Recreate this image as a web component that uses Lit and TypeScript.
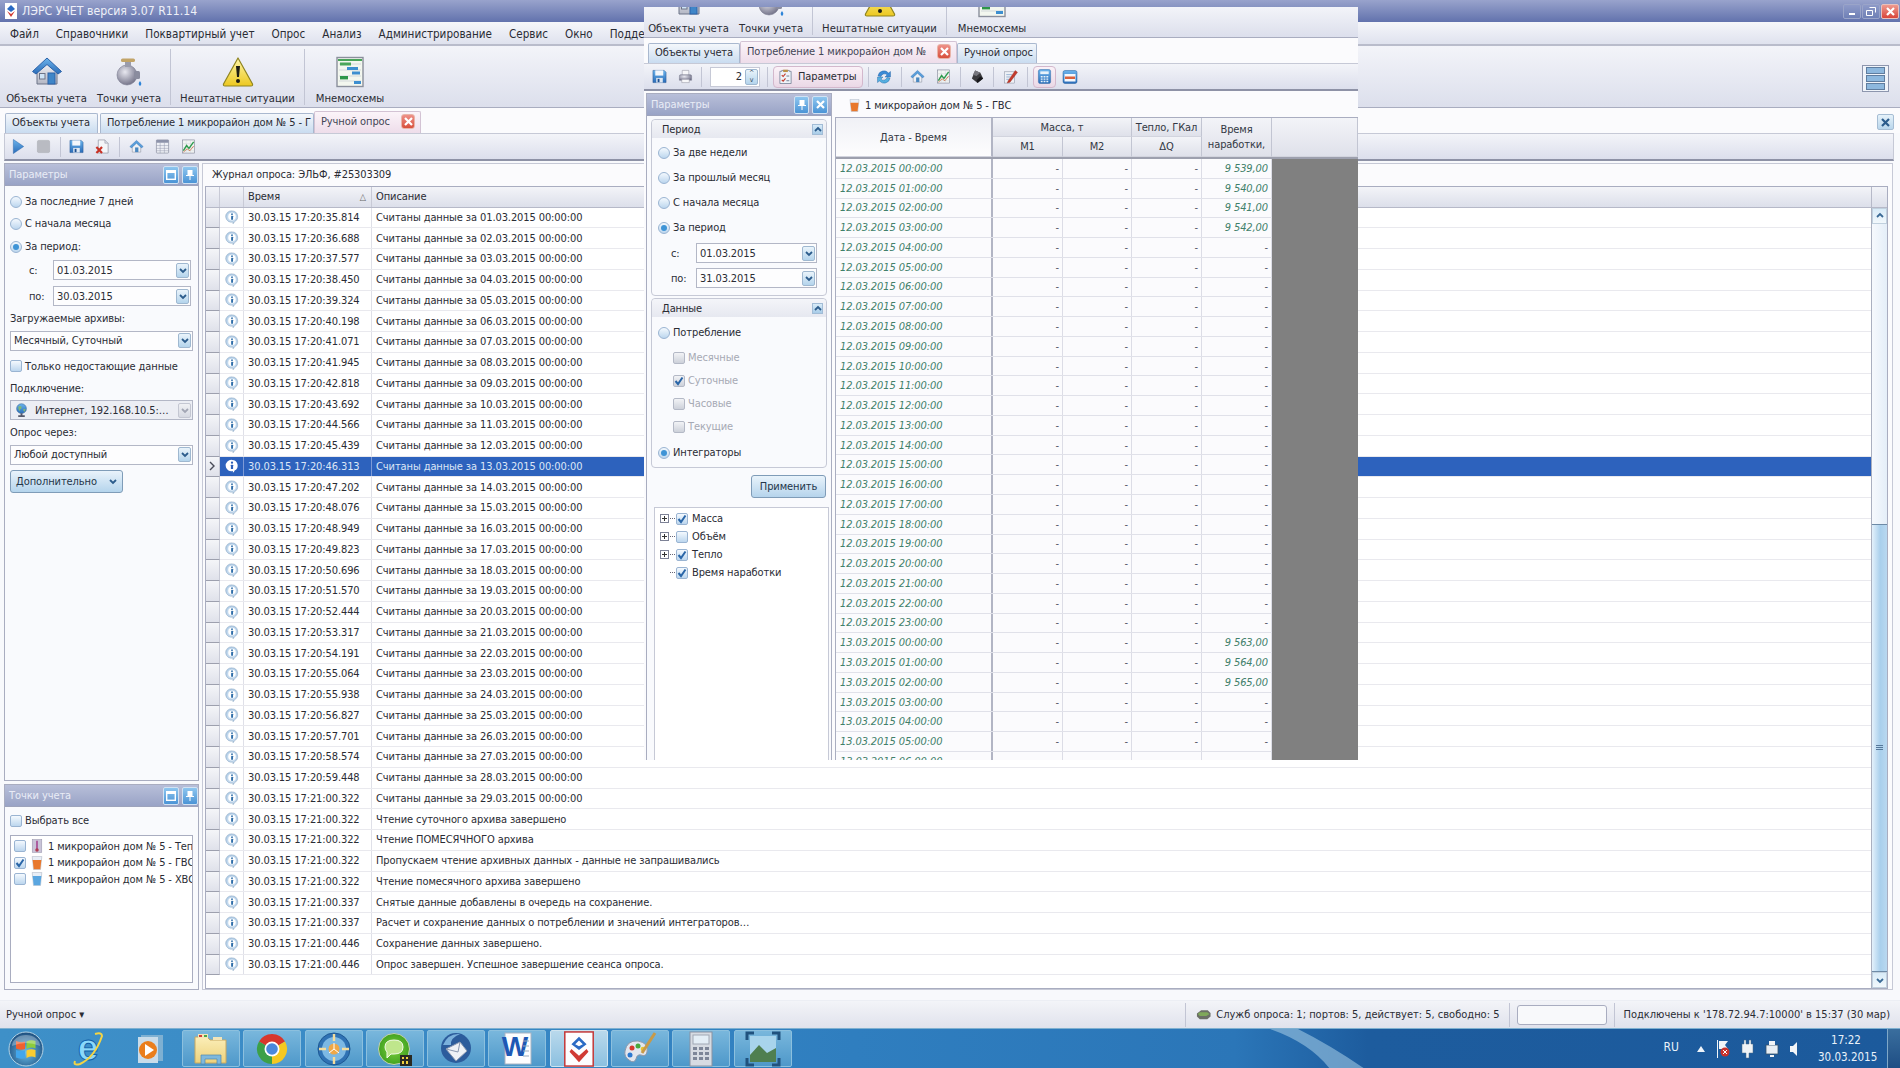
import { LitElement, html, css, svg } from 'lit';
import { customElement } from 'lit/decorators.js';

const ico = (w: number, h: number, body: unknown) =>
  html`<svg width=${w} height=${h} viewBox="0 0 32 32" class="ico">${body}</svg>`;

const icons: Record<string, (s: number) => unknown> = {
  home: (s) => ico(s, s, svg`
    <path d="M6 15 L16 6 L26 15 V28 H6Z" fill="url(#gWall)" stroke="#6d7488"/>
    <path d="M1.5 15.5 L16 2 L30.5 15.5 L27 18 L16 8.5 L5 18Z" fill="url(#gRoof)" stroke="#2c62a8"/>
    <rect x="17" y="17" width="7" height="11" fill="#3f86c8" stroke="#2c62a8"/>
    <rect x="8.5" y="17.5" width="5.5" height="5.5" fill="#cfe4f6" stroke="#6d7488"/>`),
  tap: (s) => ico(s, s, svg`
    <circle cx="14" cy="19" r="10" fill="url(#gSteel)" stroke="#7a7c90" stroke-width=".6"/>
    <rect x="12" y="5" width="6" height="6" fill="#9a9cac"/>
    <rect x="8" y="2.5" width="14" height="3.5" rx="1.6" fill="#c2a468"/>
    <rect x="21" y="15" width="6" height="8" rx="1.5" fill="#8a8c9e"/>
    <path d="M27 25 q-2.6 3 0 5 q2.6-2 0-5Z" fill="#2d84d8"/>`),
  warn: (s) => ico(s, s, svg`
    <path d="M16 2 L30.5 28 Q31 30 29 30 H3 Q1 30 1.5 28Z" fill="url(#gWarn)" stroke="#8f8420" stroke-width="1.2" stroke-linejoin="round"/>
    <path d="M14 10 h4 l-1 11 h-2Z" fill="#1c1c14"/>
    <circle cx="16" cy="25" r="2" fill="#1c1c14"/>`),
  gantt: (s) => ico(s, s, svg`
    <rect x="3" y="1.5" width="26" height="29" fill="#f3f7ef" stroke="#8a8f9c" stroke-width="1.4"/>
    <rect x="4" y="3" width="24" height="2" fill="#49a45a"/>
    <path d="M5 8H27M5 14H27M5 20H27M5 25H27" stroke="#c5cbd4" stroke-width=".7"/>
    <rect x="6" y="6.5" width="11" height="3" fill="#4aa65a"/>
    <rect x="13" y="11" width="11" height="3" fill="#3d8fd0"/>
    <rect x="18" y="15.5" width="8" height="3" fill="#3d8fd0"/>
    <rect x="6" y="20" width="8" height="3.4" fill="#2d9648"/>
    <rect x="20" y="25" width="7" height="3" fill="#3d8fd0"/>`),
  info: (s) => ico(s, s, svg`
    <path d="M16 2 a13 13 0 0 1 6 24.5 q-1 3 -4 5 q.6-3 -.2-4 A13 13 0 1 1 16 2Z" fill="url(#gInfo)" stroke="#7d99b8"/>
    <circle cx="16" cy="15" r="8.5" fill="#fff"/>
    <circle cx="16" cy="9.5" r="2" fill="#2e6da8"/>
    <rect x="14" y="13" width="4.4" height="9.5" rx="1" fill="#2e6da8"/>`),
  infoSel: (s) => ico(s, s, svg`
    <path d="M16 2 a13 13 0 0 1 6 24.5 q-1 3 -4 5 q.6-3 -.2-4 A13 13 0 1 1 16 2Z" fill="#fff"/>
    <circle cx="16" cy="8.5" r="2.6" fill="#2c5fb8"/>
    <rect x="13.5" y="13" width="5" height="10" rx="1" fill="#2c5fb8"/>`),
  play: (s) => ico(s, s, svg`<path d="M5 1 L27 16 L5 31Z" fill="url(#gRoof)" stroke="#1f5fa8"/>`),
  stop: (s) => ico(s, s, svg`<rect x="3" y="3" width="26" height="26" rx="3" fill="#b9bbc2" stroke="#a2a4ac"/>`),
  save: (s) => ico(s, s, svg`
    <path d="M2 3 H26 L30 7 V29 H2Z" fill="url(#gRoof)" stroke="#1d4f90"/>
    <rect x="7" y="3" width="17" height="11" fill="#f4f7fb"/>
    <rect x="9" y="19" width="14" height="10" fill="#dfe8f2"/>
    <rect x="12" y="21" width="4" height="7" fill="#1d4f90"/>`),
  docx: (s) => ico(s, s, svg`
    <path d="M7 2 H21 L28 9 V30 H7Z" fill="#f4f5f8" stroke="#8b8e9c" stroke-width="1.4"/>
    <path d="M21 2 V9 H28" fill="#d6d9e2" stroke="#8b8e9c"/>
    <path d="M3 17 L15 30 M15 17 L3 30" stroke="#c83226" stroke-width="4.6"/>`),
  homeSm: (s) => ico(s, s, svg`
    <path d="M7 15 L16 7 L25 15 V28 H7Z" fill="#eef0f4" stroke="#7b8190"/>
    <path d="M2 16 L16 3 L30 16 L27 19 L16 9 L5 19Z" fill="#5aa0dc" stroke="#2c6cb0"/>
    <rect x="13" y="18" width="7" height="10" fill="#4a88c0"/>`),
  table: (s) => ico(s, s, svg`
    <rect x="3" y="2" width="26" height="28" rx="1.5" fill="#eef0f5" stroke="#7e8396" stroke-width="1.3"/>
    <rect x="3" y="2" width="26" height="6" fill="#8d93aa"/>
    <path d="M3 14H29M3 20H29M3 25H29M11 8V30M20 8V30" stroke="#8d93aa"/>`),
  chart: (s) => ico(s, s, svg`
    <rect x="3" y="2" width="26" height="28" fill="#f2f5f3" stroke="#7e8396" stroke-width="1.3"/>
    <path d="M3 10H29M3 18H29M3 25H29M11 2V30M20 2V30" stroke="#c6ccd4" stroke-width=".8"/>
    <path d="M5 25 L12 14 L17 20 L27 6" fill="none" stroke="#2d9a4c" stroke-width="3"/>
    <path d="M5 28 L13 21 L19 25 L27 15" fill="none" stroke="#c8653a" stroke-width="1.6"/>`),
  print: (s) => ico(s, s, svg`
    <path d="M9 3 H23 V14 H9Z" fill="#f7f7f9" stroke="#868895"/>
    <path d="M3 15 Q3 12 6 12 H26 Q29 12 29 15 V24 H3Z" fill="url(#gSteel)" stroke="#74768a"/>
    <path d="M8 22 H24 V29 H8Z" fill="#f7f7f9" stroke="#868895"/>`),
  refresh: (s) => ico(s, s, svg`
    <path d="M4 14 A12 12 0 0 1 25 8 L29 5 V16 H18 L22 12 A7 7 0 0 0 10 15Z" fill="#3a8ad6" stroke="#24609e" stroke-width=".8"/>
    <path d="M28 18 A12 12 0 0 1 7 24 L3 27 V16 H14 L10 20 A7 7 0 0 0 22 17Z" fill="#55b0e0" stroke="#24609e" stroke-width=".8"/>`),
  stamp: (s) => ico(s, s, svg`
    <path d="M11 3 L22 8 L28 20 L16 30 L4 20Z" fill="#3a3a3e"/>
    <path d="M11 3 L22 8 L14 15 L6 12Z" fill="#77777e"/>
    <path d="M22 16 L28 20 L16 30 L14 24Z" fill="#18181c"/>`),
  edit: (s) => ico(s, s, svg`
    <rect x="3" y="6" width="21" height="24" fill="#eef1f6" stroke="#7d8496"/>
    <path d="M7 12H19M7 17H16M7 22H14" stroke="#7fa0c8" stroke-width="1.6"/>
    <path d="M11 25 L26 3 L31 7 L15 28 L9 30Z" fill="#c23a2c" stroke="#7d2016" stroke-width=".6"/>`),
  calc: (s) => ico(s, s, svg`
    <rect x="3" y="1" width="26" height="30" rx="4" fill="url(#gRoof)" stroke="#24609e"/>
    <rect x="7" y="5" width="18" height="6" fill="#e8f3fb"/>
    <path d="M8 15h4v3H8zM14 15h4v3h-4zM20 15h4v3h-4zM8 20h4v3H8zM14 20h4v3h-4zM20 20h4v3h-4zM8 25h4v3H8zM14 25h4v3h-4zM20 25h4v3h-4z" fill="#e8f3fb"/>`),
  calRed: (s) => ico(s, s, svg`
    <rect x="2" y="3" width="28" height="26" rx="4" fill="url(#gRoof)" stroke="#24609e"/>
    <rect x="5" y="10" width="22" height="15" fill="#f5f8fb"/>
    <rect x="6" y="15" width="20" height="5" fill="#d9603c"/>`),
  params: (s) => ico(s, s, svg`
    <path d="M8 3h16v2h4v26H4V5h4Z" fill="#eef3f9" stroke="#6d7a90" stroke-width="1.6"/>
    <rect x="11" y="1.5" width="10" height="5" fill="#b99148"/>
    <path d="M8 13l3 3 5-6M8 23l3 3 5-6" fill="none" stroke="#c23a2c" stroke-width="2.4"/>
    <path d="M18 15h6M18 25h6" stroke="#6d7a90" stroke-width="2"/>`),
  cupHot: (s) => ico(s, s, svg`
    <path d="M5 1 H27 L24 31 H8Z" fill="#e8eef6" stroke="#9aa3b4"/>
    <path d="M6 9 H26 L23.500 30 H8.500Z" fill="#e8782c"/>`),
  cupCold: (s) => ico(s, s, svg`
    <path d="M5 1 H27 L24 31 H8Z" fill="#e8eef6" stroke="#9aa3b4"/>
    <path d="M6 9 H26 L23.500 30 H8.500Z" fill="#5aa6e0"/>`),
  thermo: (s) => ico(s, s, svg`
    <rect x="5" y="1" width="22" height="30" fill="#c9c4d8" stroke="#8c88a0"/>
    <rect x="14" y="4" width="4" height="19" fill="#a85098"/>
    <circle cx="16" cy="25" r="4" fill="#b03a50"/>`),
  globe: (s) => ico(s, s, svg`
    <circle cx="16" cy="12" r="10.5" fill="url(#gRoof)" stroke="#2c5c90"/>
    <path d="M9 8q5-3 7 0t-3 6l-2 4zM19 14q4-2 6 0l-3 5z" fill="#7fb878"/>
    <path d="M14 22h4v4h5v4H9v-4h5z" fill="#54586a"/>`),
  box: (s) => ico(s, s, svg`
    <path d="M2 14 L11 7 H25 L31 13 V20 L24 26 H8 L2 20Z" fill="#6b6f66"/>
    <path d="M8 11 H24 L29 15 L22 19 H8 L4 15Z" fill="#7fa85a"/>`),
};

const tb: Record<string, unknown> = {
  orb: svg`<svg width="36" height="36" viewBox="0 0 36 36">
    <circle cx="18" cy="18" r="17" fill="url(#gOrb)" stroke="#b4d4e6"/>
    <path d="M8 10q4.500 2 9 .5v7.500q-4.500 1.500-9-.5z" fill="#f0602e"/>
    <path d="M18.500 10.500q4.500-2 9-.5v7.500q-4.500-2-9 .5z" fill="#8ccc3c"/>
    <path d="M8 19q4.500 2 9 .5v7.500q-4.500 1.500-9-.5z" fill="#42a6ec"/>
    <path d="M18.500 19.500q4.500-2 9-.5v7.500q-4.500-2-9 .5z" fill="#fbcc30"/>
    <path d="M4 15a14 11 0 0 1 28 0q-14-6-28 0z" fill="#fff" opacity=".3"/></svg>`,
  ie: svg`<svg width="34" height="36" viewBox="0 0 34 36">
    <text x="17" y="29" text-anchor="middle" font-family="Liberation Sans, sans-serif" font-size="37" font-weight="700" fill="#8ad8fa" stroke="#0f5ea8" stroke-width=".9">e</text>
    <path d="M4 30 Q2 35 9 33 Q24 26 31 5 Q31 1 24 3" fill="none" stroke="#f4d444" stroke-width="2"/></svg>`,
  media: svg`<svg width="28" height="36" viewBox="0 0 28 36">
    <rect x="4" y="4" width="22" height="26" fill="#8ab6d4" opacity=".85"/>
    <rect x="1" y="6" width="20" height="26" fill="#c9dcea"/>
    <circle cx="11" cy="19" r="9" fill="#ea7e1c"/>
    <path d="M8 13 L17 19 L8 25Z" fill="#fff"/></svg>`,
  folder: svg`<svg width="36" height="36" viewBox="0 0 36 36">
    <path d="M2 6 H14 L17 9 H33 V32 H2Z" fill="url(#gFold)" stroke="#c8a860"/>
    <rect x="5" y="3" width="10" height="4" fill="#f2e4b8"/>
    <rect x="6" y="4" width="3" height="2" fill="#d2403a"/><rect x="11" y="4" width="3" height="2" fill="#48a848"/>
    <rect x="20" y="6" width="9" height="3" fill="#f2e4b8"/>
    <path d="M8 33 V24 H28 V33 H24 V28 H12 V33Z" fill="#7fb8dc" stroke="#4f88b0" stroke-width=".7"/></svg>`,
  chrome: svg`<svg width="36" height="36" viewBox="0 0 36 36">
    <path d="M18 18 L5 10.500 A15 15 0 0 1 31 10.500Z" fill="#d8372c"/>
    <path d="M18 18 L31 10.500 A15 15 0 0 1 18 33Z" fill="#f4c821"/>
    <path d="M18 18 L18 33 A15 15 0 0 1 5 10.500Z" fill="#3ca048"/>
    <circle cx="18" cy="18" r="7.500" fill="#fff"/><circle cx="18" cy="18" r="5.800" fill="#4a88dc"/></svg>`,
  sun: svg`<svg width="36" height="36" viewBox="0 0 36 36">
    <circle cx="18" cy="18" r="16" fill="#2f72b4" stroke="#1d5894"/>
    <circle cx="18" cy="18" r="12" fill="#7cb8e4"/>
    <circle cx="18" cy="18" r="5.500" fill="#f0a848"/>
    <path d="M18 3V10M18 26V33M3 18H10M26 18H33" stroke="#f4dc9c" stroke-width="2.400"/>
    <path d="M18 18V12M18 18L13 22M18 18L23 22" stroke="#fff" stroke-width="1"/></svg>`,
  chat: svg`<svg width="36" height="36" viewBox="0 0 36 36">
    <circle cx="17" cy="18" r="15.500" fill="url(#gChat)" stroke="#c4d0b4"/>
    <path d="M8 16 Q8 9 17 9 Q26 9 26 16 Q26 23 17 23 H14 L10 27 V21 Q8 19 8 16Z" fill="#bfe68c" stroke="#f4fbe8"/>
    <rect x="23" y="24" width="12" height="11" fill="#2a2a22"/>
    <path d="M25 26h2v2h-2zM29 26h2v2h-2zM25 30h2v3h-2zM29 30h2v3h-2z" fill="#f0d040"/></svg>`,
  bird: svg`<svg width="36" height="36" viewBox="0 0 36 36">
    <circle cx="18" cy="17" r="15" fill="#2c5c9c"/>
    <path d="M5 14 Q10 2 22 3 Q12 7 13 14Z" fill="#7ab0dc"/>
    <path d="M8 18 L22 11 L29 20 L18 30Z" fill="#eef1f6" stroke="#8a98b0"/>
    <path d="M8 18 L20 21 L22 11" fill="none" stroke="#8a98b0"/></svg>`,
  word: svg`<svg width="36" height="36" viewBox="0 0 36 36">
    <rect x="6" y="2" width="26" height="31" fill="#fdfdfe" stroke="#a8b4c4"/>
    <text x="16" y="25" text-anchor="middle" font-family="Liberation Sans, sans-serif" font-size="28" font-weight="700" fill="#1e58b4">W</text>
    <path d="M24 10h6M24 15h6M24 20h6M24 25h6" stroke="#9ab" stroke-width="1.200"/></svg>`,
  lers: svg`<svg width="36" height="36" viewBox="0 0 36 38">
    <rect x="3" y="1" width="30" height="36" fill="#fdfdfe" stroke="#c43a3a" stroke-width="1.600"/>
    <path d="M18 6 L26 14 L18 20 L10 14Z M18 10 L14 14 L18 16 L22 14Z" fill="#2a6ac4" fill-rule="evenodd"/>
    <path d="M10 19 L18 26 L26 19 L28 22 L18 33 L8 22Z" fill="#d03a34"/></svg>`,
  paint: svg`<svg width="36" height="36" viewBox="0 0 36 36">
    <path d="M3 20 Q5 9 16 10 Q27 12 25 21 Q24 26 19 24 Q15 23 14 28 Q12 33 7 29 Q2 26 3 20Z" fill="#e2e6ee" stroke="#8e98aa"/>
    <circle cx="10" cy="17" r="2.500" fill="#d8382c"/><circle cx="16" cy="15" r="2.500" fill="#48a83c"/>
    <circle cx="8" cy="24" r="2.500" fill="#2c78d0"/><circle cx="21" cy="18" r="2.300" fill="#e8c430"/>
    <path d="M20 22 L33 2" stroke="#c89a48" stroke-width="3"/></svg>`,
  calcT: svg`<svg width="34" height="36" viewBox="0 0 34 36">
    <rect x="6" y="1" width="22" height="34" fill="#d6dbe2" stroke="#8a92a2"/>
    <rect x="9" y="4" width="16" height="9" fill="#e4eef6" stroke="#a0a8b4"/>
    <path d="M9 16h4v3H9zM15 16h4v3h-4zM21 16h4v3h-4zM9 21h4v3H9zM15 21h4v3h-4zM21 21h4v3h-4zM9 26h4v3H9zM15 26h4v3h-4zM21 26h4v3h-4z" fill="#7d8698"/></svg>`,
  photo: svg`<svg width="36" height="36" viewBox="0 0 36 36">
    <rect x="5" y="5" width="26" height="26" fill="#a8d4ec"/>
    <path d="M5 24 L14 14 L22 22 L31 17 V31 H5Z" fill="#4f7f50"/>
    <path d="M2 9V2H9M27 2H34V9M2 27V34H9M27 34H34V27" fill="none" stroke="#20527e" stroke-width="3"/></svg>`,
};

const journal: [string, string][] = [
  ['17:20:35.814', '01'], ['17:20:36.688', '02'], ['17:20:37.577', '03'], ['17:20:38.450', '04'],
  ['17:20:39.324', '05'], ['17:20:40.198', '06'], ['17:20:41.071', '07'], ['17:20:41.945', '08'],
  ['17:20:42.818', '09'], ['17:20:43.692', '10'], ['17:20:44.566', '11'], ['17:20:45.439', '12'],
  ['17:20:46.313', '13'], ['17:20:47.202', '14'], ['17:20:48.076', '15'], ['17:20:48.949', '16'],
  ['17:20:49.823', '17'], ['17:20:50.696', '18'], ['17:20:51.570', '19'], ['17:20:52.444', '20'],
  ['17:20:53.317', '21'], ['17:20:54.191', '22'], ['17:20:55.064', '23'], ['17:20:55.938', '24'],
  ['17:20:56.827', '25'], ['17:20:57.701', '26'], ['17:20:58.574', '27'], ['17:20:59.448', '28'],
  ['17:21:00.322', '29'],
];
const journalRows: [string, string][] = [
  ...journal.map(([t, d]): [string, string] => [t, `Считаны данные за ${d}.03.2015 00:00:00`]),
  ['17:21:00.322', 'Чтение суточного архива завершено'],
  ['17:21:00.322', 'Чтение ПОМЕСЯЧНОГО архива'],
  ['17:21:00.322', 'Пропускаем чтение архивных данных - данные не запрашивались'],
  ['17:21:00.322', 'Чтение помесячного архива завершено'],
  ['17:21:00.337', 'Снятые данные добавлены в очередь на сохранение.'],
  ['17:21:00.337', 'Расчет и сохранение данных о потреблении и значений интеграторов…'],
  ['17:21:00.446', 'Сохранение данных завершено.'],
  ['17:21:00.446', 'Опрос завершен. Успешное завершение сеанса опроса.'],
];

const hours = (day: string, from: number, to: number) => {
  const out: string[] = [];
  for (let h = from; h <= to; h++) out.push(`${day}.03.2015 ${String(h).padStart(2, '0')}:00:00`);
  return out;
};
const consumption = [...hours('12', 0, 23), ...hours('13', 0, 6)];
const hoursRun: Record<number, string> = {
  0: '9 539,00', 1: '9 540,00', 2: '9 541,00', 3: '9 542,00',
  24: '9 563,00', 25: '9 564,00', 26: '9 565,00',
};

@customElement('app-root')
export class AppRoot extends LitElement {
  static styles = css`
    :host {
      display: block;
      position: relative;
      width: 1900px;
      height: 1068px;
      overflow: hidden;
      font-family: 'DejaVu Sans Condensed', 'DejaVu Sans', sans-serif;
      font-size: 11px;
      letter-spacing: -0.1px;
      color: #2a2c34;
      background: #f8f9fc;
    }
    .ico { display: block; flex: none; }
    .defs { position: absolute; width: 0; height: 0; }
    .app { display: flex; flex-direction: column; height: 1068px; }

    .title {
      height: 22px; flex: none; display: flex; align-items: center; padding-left: 5px; gap: 5px;
      background: linear-gradient(#99a3cc, #6272ad); color: #eef0f8; font-size: 12.2px; letter-spacing: 0;
    }
    .title .logo { width: 12px; height: 16px; background: #fff; display: flex; align-items: center; justify-content: center; }
    .winbtns { margin-left: auto; display: flex; gap: 1px; padding-right: 1px; }
    .winbtn {
      width: 16px; height: 13px; border: 1px solid #9aa4c8; border-radius: 2px; display: flex; align-items: center; justify-content: center;
      background: linear-gradient(#8e9ac8, #6f80b6);
    }
    .winbtn.close { background: linear-gradient(#ee9a90, #d9463a); border-color: #e8c0bc; }

    .menu {
      height: 24px; flex: none; display: flex; align-items: center; gap: 17px; padding: 2px 0 0 10px; box-sizing: border-box;
      background: linear-gradient(#f5f6fa, #dfe2ee); border-bottom: 2px solid #b9bccb; font-size: 11.6px; letter-spacing: 0;
    }

    .ribbon {
      flex: none; display: flex; align-items: flex-end; gap: 8px; overflow: hidden; padding-left: 6px; box-sizing: border-box;
      background: linear-gradient(#f3f4f9, #dcdfec); border-bottom: 1px solid #a9adc0; font-size: 11.2px; letter-spacing: 0;
    }
    .ribbon.main { height: 62px; padding-bottom: 2px; }
    .ribbon.over { height: 31px; padding-left: 4px; padding-bottom: 2px; }
    .rb { display: flex; flex-direction: column; align-items: center; gap: 4px; white-space: nowrap; }
    .rb.w1 { width: 81px; margin-right: 1px; }
    .rb.w2 { width: 66px; }
    .rb.w3 { width: 117px; }
    .rb.w4 { width: 74px; }
    .rb-sep { width: 1px; height: 56px; background: #c2c5d4; }
    .rb-end {
      margin: 0 11px 13px auto; width: 27px; height: 27px; box-sizing: border-box; border: 1px solid #8d96ae; background: #f0f4fa;
      display: flex; flex-direction: column; justify-content: center; gap: 1px; padding: 0 3px;
    }
    .rb-end i { display: block; height: 5px; background: #8db8de; border: 1px solid #5f7d9f; }

    .tabs {
      height: 25px; flex: none; display: flex; align-items: flex-end; padding-left: 5px; box-sizing: border-box;
      background: #fbfbfd; position: relative;
    }
    .tab {
      height: 20px; box-sizing: border-box; padding: 0 0 2px 6px; display: flex; align-items: center; white-space: nowrap; overflow: hidden;
      background: linear-gradient(#f4f7fb, #c9dcf0); border: 1px solid #a9b8cf; border-bottom: 0; border-radius: 2px 2px 0 0;
    }
    .tab.on {
      height: 22px; background: linear-gradient(#fbf4f9, #eeddea); color: #444656; border-color: #d3c3d4; justify-content: space-between; padding-right: 5px;
    }
    .x {
      width: 14px; height: 15px; border-radius: 3px; display: flex; align-items: center; justify-content: center; flex: none;
      background: linear-gradient(#ee9088, #d8503c); border: 1px solid #e8b4a8; box-sizing: border-box;
    }
    .tab-close {
      margin: 0 6px 3px auto; width: 17px; height: 16px; flex: none; border-radius: 2px; display: flex; align-items: center; justify-content: center;
      background: linear-gradient(#e6f2fa, #b9d6ec); border: 1px solid #a6bdd4; box-sizing: border-box;
    }

    .toolbar {
      height: 28px; flex: none; box-sizing: border-box; display: flex; align-items: center; margin: 0 6px 0 4px; padding-left: 6px;
      background: linear-gradient(#f3f4f9, #dcdfec); border: 1px solid #c6c9d6; border-bottom: 2px solid #8e92a6;
    }
    .toolbar.over { margin: 0; padding-left: 8px; border-left: 0; border-right: 0; }
    .t-sep { width: 1px; height: 20px; background: #c2c5d4; flex: none; }

    .body { flex: 1; min-height: 0; display: flex; gap: 3px; padding: 2px 7px 10px 4px; }
    .side { width: 195px; flex: none; display: flex; flex-direction: column; gap: 3px; }
    .panel {
      border: 1px solid #a9adc0; display: flex; flex-direction: column; background: #f9fafd; min-height: 0; box-sizing: border-box;
    }
    .panel.grow { flex: 1; }
    .panel.low { height: 206px; flex: none; }
    .ph {
      height: 22px; flex: none; display: flex; align-items: center; padding-left: 4px; gap: 3px; box-sizing: border-box; border-bottom: 1px solid #9da3bc;
      background: linear-gradient(#b8bfd9, #99a3c6); color: #e9ecf6;
    }
    .ph span { flex: 1; }
    .ph-btn {
      width: 16px; height: 18px; box-sizing: border-box; border-radius: 2px; display: flex; align-items: center; justify-content: center;
      background: linear-gradient(#8ec6ef, #4b94d6); border: 1px solid #d2e2f2;
    }

    .form { padding: 0 5px; display: flex; flex-direction: column; }
    .line { display: flex; align-items: center; gap: 3px; white-space: nowrap; }
    .radio {
      width: 12px; height: 12px; border-radius: 50%; box-sizing: border-box; flex: none; border: 1px solid #9ab4d2; display: flex; align-items: center; justify-content: center;
      background: linear-gradient(#f4f9fe, #bcd6ee);
    }
    .radio.on::after { content: ''; width: 6px; height: 6px; border-radius: 50%; background: #3f94d6; }
    .check {
      width: 12px; height: 12px; box-sizing: border-box; border-radius: 2px; flex: none; border: 1px solid #9ab4d2; display: flex; align-items: center; justify-content: center;
      background: linear-gradient(#f4f9fe, #bcd6ee);
    }
    .check.off { border-color: #b4b9c6; background: linear-gradient(#f2f3f6, #cdd1da); }
    .muted { color: #a6a9b4; }
    .input {
      height: 20px; box-sizing: border-box; display: flex; align-items: center; justify-content: space-between; padding: 0 1px 0 3px; white-space: nowrap; overflow: hidden;
      background: #fdfdfe; border: 1px solid #b3b7c6;
    }
    .input.dis { background: #eceef4; }
    .drop {
      width: 13px; height: 15px; flex: none; box-sizing: border-box; border-radius: 2px; display: flex; align-items: center; justify-content: center;
      background: linear-gradient(#eaf4fb, #b4d4ec); border: 1px solid #9fb8d0;
    }
    .input.dis .drop { background: linear-gradient(#f0f1f4, #d6d9e2); border-color: #c4c7d2; }
    .btn {
      display: flex; align-items: center; justify-content: center; box-sizing: border-box; border: 1px solid #7f9cb8; border-radius: 3px;
      background: linear-gradient(#e9f3fb, #b5d4ec); gap: 12px; color: #24364a;
    }

    .main-col { flex: 1; min-width: 0; display: flex; flex-direction: column; border: 1px solid #c6c9d6; background: #fbfbfd; box-sizing: border-box; padding: 0 4px 0 2px; }
    .journal-title { height: 21.500px; flex: none; display: flex; align-items: center; padding-left: 7px; }
    .jt { display: flex; flex-direction: column; border: 1px solid #a9adc0; background: #fff; flex: 1; min-height: 0; }
    .jh, .jr { display: grid; grid-template-columns: 14px 24px 128px 1fr; }
    .jh { height: 21px; flex: none; background: linear-gradient(#f3f4f8, #dcdfea); border-bottom: 1px solid #b6b9c8; box-sizing: border-box; }
    .jh > div { display: flex; align-items: center; padding-left: 4px; border-right: 1px solid #c8cad6; position: relative; }
    .jh > div:last-child { border-right: 0; padding: 0; }
    .sort { margin-left: auto; margin-right: 5px; font-size: 9px; color: #666; }
    .jb { flex: 1; display: flex; min-height: 0; }
    .jl { flex: 1; min-width: 0; }
    .jr { height: 20.75px; box-sizing: border-box; border-bottom: 1px solid #e9e9ee; white-space: nowrap; }
    .jr > div { display: flex; align-items: center; padding-left: 4px; box-sizing: border-box; }
    .jr .ind { padding: 0; background: linear-gradient(#f4f5f8, #dfe1ea); border-right: 1px solid #c8cad6; border-bottom: 1px solid #9da0ae; margin-bottom: -1px; color: #4a4c58; justify-content: center; }
    .jr .ic { padding-left: 5px; border-right: 1px solid #dfe0e8; }
    .jr .tm { border-right: 1px solid #dfe0e8; }
    .jr.sel .ic, .jr.sel .tm, .jr.sel .ds { background: #2d62bd; color: #dce6f6; border-color: #7d9ad6; }
    .sb { width: 16px; flex: none; display: flex; flex-direction: column; border-left: 1px solid #aab0c0; box-sizing: border-box; background: #fff; }
    .sb-btn { height: 16px; flex: none; display: flex; align-items: center; justify-content: center; background: linear-gradient(#d8ebf8, #f2f8fc); border: 1px solid #c0d0de; box-sizing: border-box; }
    .sb-track { height: 300px; flex: none; background: linear-gradient(90deg, #f6f9fd, #e4eef8); }
    .sb-thumb { flex: 1; display: flex; align-items: center; justify-content: center; background: linear-gradient(90deg, #e4f1fb, #a9cfec 55%, #b9d8f0); border-top: 1px solid #6d8aa6; border-bottom: 1px solid #6d8aa6; }
    .grip { width: 7px; height: 6px; background: repeating-linear-gradient(#56789a 0 1px, transparent 1px 2px); }

    .status {
      height: 28px; flex: none; display: flex; align-items: center; padding-left: 6px; box-sizing: border-box; white-space: nowrap;
      background: linear-gradient(#f3f4f8, #e0e2ec); border-top: 1px solid #eceef4; letter-spacing: 0;
    }
    .status .sp { margin-left: auto; }
    .st-sep { width: 1px; height: 24px; background: #c2c5d4; flex: none; }
    .st-box { width: 90px; height: 20px; box-sizing: border-box; border: 1px solid #a9adc0; border-radius: 3px; background: #f8f9fb; margin: 0 7px; }

    .taskbar {
      height: 40px; flex: none; position: relative; overflow: hidden; display: flex; align-items: center; color: #eaf2fa;
      background: linear-gradient(90deg, #3e90c8 0, #3a8ac6 20%, #2f7ebf 45%, #2b76b8 65%, #1d5c9e 72%, #1c5a9c 100%);
      border-top: 1px solid #7fb0d0; box-sizing: border-box; letter-spacing: 0;
    }
    .streak { position: absolute; left: 1270px; top: 0; }
    .ql { width: 182px; flex: none; display: flex; align-items: center; position: relative; padding-left: 8px; box-sizing: border-box; }
    .ql > :nth-child(2) { margin-left: 27px; }
    .ql > :nth-child(3) { margin-left: 32px; }
    .tbtn {
      width: 58px; height: 37px; flex: none; margin-right: 3.300px; box-sizing: border-box; display: flex; align-items: center; justify-content: center; position: relative;
      border: 1px solid #8cc0de; border-radius: 2px; background: linear-gradient(#79b7dc, #4e98ca);
    }
    .tbtn.act { background: linear-gradient(#b9d9ec, #8cc0e0); border-color: #cfe4f0; }
    .tray { margin-left: auto; display: flex; align-items: center; position: relative; height: 100%; }
    .tray .ru { margin-right: 15px; font-size: 12px; margin-bottom: 4px; }
    .clock { width: 56px; text-align: center; line-height: 17px; font-size: 11.500px; margin-left: 20px; margin-right: 13px; white-space: nowrap; }
    .desk { width: 13px; height: 100%; background: linear-gradient(#3a6e9e, #1e4e84); border-left: 1px solid #7fa8c8; box-sizing: border-box; }
    .tr-i { margin-right: 11px; }

    /* окно "Потребление" поверх основного */
    .win {
      position: absolute; left: 644px; top: 7px; width: 714px; height: 753px; display: flex; flex-direction: column; background: #fbfbfd; overflow: hidden; z-index: 2;
    }
    .win .tabs { padding-left: 4px; }
    .w-body { flex: 1; min-height: 0; display: flex; gap: 3px; padding: 2px 0 0 2px; }
    .w-side { width: 186px; flex: none; border: 1px solid #a9adc0; border-bottom: 0; box-sizing: border-box; background: #f9fafd; display: flex; flex-direction: column; }
    .group { margin: 3px 4px 0; border: 1px solid #c6c9d6; border-radius: 4px; display: flex; flex-direction: column; }
    .g-h { height: 18px; flex: none; display: flex; align-items: center; justify-content: space-between; padding: 0 3px 0 10px; background: linear-gradient(#f4f5f9, #e6e8f0); border-radius: 4px 4px 0 0; }
    .g-col { width: 11px; height: 11px; box-sizing: border-box; border: 1px solid #a2bcd6; background: linear-gradient(#d8ebf8, #a8cce8); display: flex; align-items: center; justify-content: center; }
    .tree { margin: 9px 2px 0 7px; flex: 1; border: 1px solid #c6c9d6; border-bottom: 0; background: #fff; padding: 2px 0 0 5px; }
    .tree .line { height: 17.900px; }
    .exp { width: 9px; height: 9px; border: 1px solid #7d8296; box-sizing: border-box; position: relative; flex: none; background: #fff; }
    .exp::before { content: ''; position: absolute; left: 1px; right: 1px; top: 3px; height: 1px; background: #333; }
    .exp::after { content: ''; position: absolute; top: 1px; bottom: 1px; left: 3px; width: 1px; background: #333; }
    .dots { width: 5px; border-top: 1px dotted #667; flex: none; }

    .w-main { flex: 1; min-width: 0; display: flex; flex-direction: column; }
    .w-cap { height: 24px; flex: none; display: flex; align-items: center; gap: 4px; padding-left: 13px; }
    .ct { flex: 1; min-height: 0; overflow: hidden; border-left: 1px solid #a9adc0; border-top: 1px solid #a9adc0; display: flex; flex-direction: column; }
    .cth, .ctr { display: grid; grid-template-columns: 157px 70px 69px 70px 70px 1fr; }
    .cth { grid-template-rows: 19px 20px; flex: none; border-bottom: 2px solid #9da0ae; height: 41px; box-sizing: border-box; }
    .cth > div {
      display: flex; align-items: center; justify-content: center; text-align: center; line-height: 15px; border-right: 1px solid #c2c5d2; border-bottom: 1px solid #d2d4de; box-sizing: border-box;
      background: linear-gradient(#f3f4f8, #dfe1ea); color: #333844;
    }
    .cth .date { grid-column: 1; grid-row: 1 / 3; border-right: 2px solid #b2b5c4; background: linear-gradient(#f0f1f6, #fdfdfe); }
    .cth .mass { grid-column: 2 / 4; grid-row: 1; }
    .cth .heat { grid-column: 4; grid-row: 1; }
    .cth .run { grid-column: 5; grid-row: 1 / 3; }
    .cth .blank { grid-column: 6; grid-row: 1 / 3; }
    .cth .m1 { grid-column: 2; grid-row: 2; }
    .cth .m2 { grid-column: 3; grid-row: 2; }
    .cth .dq { grid-column: 4; grid-row: 2; }
    .ctr { height: 19.770px; flex: none; box-sizing: border-box; border-bottom: 1px solid #e0e1e9; }
    .ctr > div { display: flex; align-items: center; justify-content: flex-end; padding-right: 3px; border-right: 1px solid #dcdde6; box-sizing: border-box; white-space: nowrap; color: #555864; }
    .ctr .d { justify-content: flex-start; padding-left: 4px; font-style: italic; color: #41806a; border-right: 2px solid #b2b5c4; }
    .ctr .v { font-style: italic; color: #41806a; }
    .ctr .gray { background: #808080; border: 0; margin-bottom: -1px; }
    .t-on { border: 1px solid #d3b8cc; border-radius: 4px; background: linear-gradient(#fbf2f8, #ead8e6); flex: none; display: flex; align-items: center; box-sizing: border-box; }
    .spin { width: 50px; height: 20px; margin-left: 8px; box-sizing: border-box; background: #fff; border: 1px solid #c6c9d6; display: flex; align-items: center; justify-content: flex-end; gap: 3px; padding-right: 1px; flex: none; }
    .spin i { width: 13px; height: 16px; border: 1px solid #9fb8d0; border-radius: 2px; background: linear-gradient(#eaf4fb, #b4d4ec); box-sizing: border-box; font-style: normal; font-size: 7px; line-height: 7px; color: #345; text-align: center; }
  `;

  private chevron(color = '#2c5c8c', up = false) {
    const d = up ? 'M1 5 L4 2 L7 5' : 'M1 2 L4 5 L7 2';
    return html`<svg width="8" height="7" viewBox="0 0 8 7"><path d=${d} fill="none" stroke=${color} stroke-width="1.800"/></svg>`;
  }

  private tick() {
    return html`<svg width="10" height="10" viewBox="0 0 10 10"><path d="M1.500 5 L4 8 L8.500 1.500" fill="none" stroke="#2a66a8" stroke-width="2"/></svg>`;
  }

  private cross(color = '#fff') {
    return html`<svg width="9" height="9" viewBox="0 0 9 9"><path d="M1 1 L8 8 M8 1 L1 8" stroke=${color} stroke-width="2.200"/></svg>`;
  }

  private pin() {
    return html`<svg width="10" height="12" viewBox="0 0 10 12"><path d="M2.500 1h5v5h1.500v1h-3.500v4h-1v-4h-3.500v-1h1.500z" fill="#fff"/></svg>`;
  }

  private maxi() {
    return html`<svg width="10" height="10" viewBox="0 0 10 10"><rect x=".7" y=".7" width="8.600" height="8.600" fill="none" stroke="#fff" stroke-width="1.400"/><rect x="1" y="1" width="8" height="2" fill="#fff"/></svg>`;
  }

  private ribbon(cls: string) {
    return html`<div class="ribbon ${cls}">
      <div class="rb w1">${icons.home(32)}<span>Объекты учета</span></div>
      <div class="rb w2">${icons.tap(32)}<span>Точки учета</span></div>
      <div class="rb-sep"></div>
      <div class="rb w3">${icons.warn(32)}<span>Нештатные ситуации</span></div>
      <div class="rb-sep"></div>
      <div class="rb w4">${icons.gantt(32)}<span>Мнемосхемы</span></div>
      ${cls === 'main' ? html`<div class="rb-end"><i></i><i></i><i></i></div>` : ''}
    </div>`;
  }

  private tbi(name: string, s: number, ml: number) {
    return html`<span style="margin-left:${ml}px">${icons[name](s)}</span>`;
  }

  private dateRow(label: string, value: string, pl: number, lw: number, w: number, mt: number) {
    return html`<div class="line" style="margin-top:${mt}px">
      <span style="width:${lw}px;padding-left:${pl}px;box-sizing:border-box">${label}</span>
      <div class="input" style="width:${w}px">${value}<span class="drop">${this.chevron()}</span></div>
    </div>`;
  }

  private leftPanels() {
    return html`<div class="side">
      <div class="panel grow">
        <div class="ph"><span>Параметры</span><div class="ph-btn">${this.maxi()}</div><div class="ph-btn">${this.pin()}</div></div>
        <div class="form">
          <div class="line" style="margin-top:9px;height:13px"><span class="radio"></span><span>За последние 7 дней</span></div>
          <div class="line" style="margin-top:9px;height:13px"><span class="radio"></span><span>С начала месяца</span></div>
          <div class="line" style="margin-top:10px;height:13px"><span class="radio on"></span><span>За период:</span></div>
          ${this.dateRow('с:', '01.03.2015', 19, 40, 138, 7)}
          ${this.dateRow('по:', '30.03.2015', 19, 40, 138, 6)}
          <div class="line" style="margin-top:5.400px;height:15px">Загружаемые архивы:</div>
          <div class="input" style="width:183px;margin-top:4.300px">Месячный, Суточный<span class="drop">${this.chevron()}</span></div>
          <div class="line" style="margin-top:9px;height:13px"><span class="check"></span><span>Только недостающие данные</span></div>
          <div class="line" style="margin-top:8.300px;height:15px">Подключение:</div>
          <div class="input dis" style="width:183px;margin-top:4.200px">
            <span class="line" style="gap:6px">${icons.globe(15)}Интернет, 192.168.10.5:…</span><span class="drop">${this.chevron('#a2a6b4')}</span>
          </div>
          <div class="line" style="margin-top:4.800px;height:15px">Опрос через:</div>
          <div class="input" style="width:183px;margin-top:5px">Любой доступный<span class="drop">${this.chevron()}</span></div>
          <div class="btn" style="width:113px;height:23px;margin-top:5px">Дополнительно ${this.chevron()}</div>
        </div>
      </div>
      <div class="panel low">
        <div class="ph"><span>Точки учета</span><div class="ph-btn">${this.maxi()}</div><div class="ph-btn">${this.pin()}</div></div>
        <div class="form" style="flex:1;padding-bottom:6px">
          <div class="line" style="margin-top:7px;height:13px"><span class="check"></span><span>Выбрать все</span></div>
          <div style="margin-top:8px;flex:1;border:1px solid #a9adc0;background:#fff;width:183px;box-sizing:border-box;overflow:hidden;padding:2px 0 0 3px">
            ${[['thermo', 'Тепл', false], ['cupHot', 'ГВС', true], ['cupCold', 'ХВС', false]].map(([ic, n, on]) => html`
              <div class="line" style="height:16.500px;gap:4px">
                <span class="check">${on ? this.tick() : ''}</span>${icons[ic as string](14)}<span>1 микрорайон дом № 5 - ${n}</span>
              </div>`)}
          </div>
        </div>
      </div>
    </div>`;
  }

  private journal() {
    return html`<div class="main-col">
      <div class="journal-title">Журнал опроса: ЭЛЬФ, #25303309</div>
      <div class="jt">
        <div class="jh">
          <div></div><div></div>
          <div>Время<span class="sort">△</span></div>
          <div style="display:flex;justify-content:space-between"><span style="padding-left:4px">Описание</span><span style="width:16px;height:100%;border-left:1px solid #b6b9c8;box-sizing:border-box"></span></div>
        </div>
        <div class="jb">
          <div class="jl">
            ${journalRows.map(([t, d], i) => html`<div class="jr ${i === 12 ? 'sel' : ''}">
              <div class="ind">${i === 12 ? html`<svg width="7" height="10" viewBox="0 0 7 10"><path d="M1 1 L5 5 L1 9" fill="none" stroke="#4a4c58" stroke-width="1.400"/></svg>` : ''}</div>
              <div class="ic">${i === 12 ? icons.infoSel(14) : icons.info(14)}</div>
              <div class="tm">30.03.15 ${t}</div>
              <div class="ds">${d}</div>
            </div>`)}
          </div>
          <div class="sb">
            <div class="sb-btn">${this.chevron('#3a6a96', true)}</div>
            <div class="sb-track"></div>
            <div class="sb-thumb"><span class="grip"></span></div>
            <div class="sb-btn">${this.chevron('#3a6a96')}</div>
          </div>
        </div>
      </div>
    </div>`;
  }

  private taskbar() {
    return html`<div class="taskbar">
      <svg class="streak" width="110" height="40" viewBox="0 0 110 40">
        <path d="M0 0 H28 Q60 16 95 40 H60 Q40 14 0 0Z" fill="#a9cfe8" opacity=".55"/>
      </svg>
      <div class="ql">${tb.orb}${tb.ie}${tb.media}</div>
      ${['folder', 'chrome', 'sun', 'chat', 'bird', 'word', 'lers', 'paint', 'calcT', 'photo'].map((n) => html`
        <div class="tbtn ${n === 'lers' ? 'act' : ''}">${tb[n]}</div>`)}
      <div class="tray">
        <span class="ru">RU</span>
        <svg class="tr-i" width="8" height="6" viewBox="0 0 8 6" style="margin-left:3px"><path d="M4 0 L8 6 H0Z" fill="#eef4fa"/></svg>
        <svg class="tr-i" width="14" height="20" viewBox="0 0 14 20"><path d="M1 1 H2 V19 H1Z M3 2 H12 L9 6 L12 10 H3Z" fill="#f2f5f8"/><circle cx="9" cy="13" r="4.500" fill="#c8322c"/><path d="M7 11 L11 15 M11 11 L7 15" stroke="#fff"/></svg>
        <svg class="tr-i" width="13" height="20" viewBox="0 0 13 20"><path d="M3 1 H5 V5 H8 V1 H10 V5 H12 V14 H8 V19 H5 V14 H1 V5 H3Z" fill="#f0f3f6" stroke="#4a6a86" stroke-width=".5"/></svg>
        <svg class="tr-i" width="14" height="18" viewBox="0 0 14 18"><rect x="1" y="5" width="12" height="9" fill="#e8eef4" stroke="#35506a" stroke-width=".8"/><rect x="4" y="1" width="6" height="4" fill="#f0f3f6"/><path d="M5 15h4v2H5z" fill="#f0f3f6"/></svg>
        <svg width="8" height="14" viewBox="0 0 8 14"><path d="M0 4 H3 L7 0 V14 L3 10 H0Z" fill="#f2f5f8"/></svg>
        <div class="clock">17:22<br />30.03.2015</div>
        <div class="desk"></div>
      </div>
    </div>`;
  }

  private consumption() {
    return html`<div class="win">
      ${this.ribbon('over')}
      <div class="tabs" style="height:25px">
        <div class="tab" style="width:92px">Объекты учета</div>
        <div class="tab on" style="width:217px">Потребление 1 микрорайон дом №<span class="x">${this.cross()}</span></div>
        <div class="tab" style="width:80px">Ручной опрос</div>
      </div>
      <div class="toolbar over">
        ${this.tbi('save', 15, 0)}${this.tbi('print', 15, 11)}
        <span class="t-sep" style="margin-left:8px"></span>
        <div class="spin">2<i>^<br />v</i></div>
        <span class="t-sep" style="margin-left:7px"></span>
        <div class="t-on" style="width:90px;height:22px;margin-left:5px;padding-left:4px;gap:5px">${icons.params(15)}Параметры</div>
        <span class="t-sep" style="margin-left:5px"></span>
        ${this.tbi('refresh', 16, 7)}
        <span class="t-sep" style="margin-left:9px"></span>
        ${this.tbi('homeSm', 15, 8)}${this.tbi('chart', 15, 11)}
        <span class="t-sep" style="margin-left:9px"></span>
        ${this.tbi('stamp', 15, 9)}
        <span class="t-sep" style="margin-left:8px"></span>
        ${this.tbi('edit', 15, 9)}
        <span class="t-sep" style="margin-left:9px"></span>
        <div class="t-on" style="width:23px;height:22px;margin-left:5px;justify-content:center">${icons.calc(15)}</div>
        ${this.tbi('calRed', 16, 6)}
      </div>
      <div class="w-body">
        <div class="w-side">
          <div class="ph" style="padding-right:3px"><span>Параметры</span><div class="ph-btn" style="width:15px">${this.pin()}</div><div class="ph-btn" style="width:16px">${this.cross()}</div></div>
          <div class="group" style="height:175px">
            <div class="g-h"><span>Период</span><span class="g-col">${this.chevron('#2c5c8c', true)}</span></div>
            <div class="form" style="padding:0 0 0 6px">
              <div class="line" style="margin-top:8px;height:13px"><span class="radio"></span>За две недели</div>
              <div class="line" style="margin-top:12px;height:13px"><span class="radio"></span>За прошлый месяц</div>
              <div class="line" style="margin-top:12px;height:13px"><span class="radio"></span>С начала месяца</div>
              <div class="line" style="margin-top:12px;height:13px"><span class="radio on"></span>За период</div>
              ${this.dateRow('с:', '01.03.2015', 13, 35, 121, 9)}
              ${this.dateRow('по:', '31.03.2015', 13, 35, 121, 5)}
            </div>
          </div>
          <div class="group" style="height:168px;margin-top:2px">
            <div class="g-h"><span>Данные</span><span class="g-col">${this.chevron('#2c5c8c', true)}</span></div>
            <div class="form" style="padding:0 0 0 6px">
              <div class="line" style="margin-top:9px;height:13px"><span class="radio"></span>Потребление</div>
              <div class="line muted" style="margin:12px 0 0 15px;height:13px"><span class="check off"></span>Месячные</div>
              <div class="line muted" style="margin:10px 0 0 15px;height:13px"><span class="check off">${this.tick()}</span>Суточные</div>
              <div class="line muted" style="margin:10px 0 0 15px;height:13px"><span class="check off"></span>Часовые</div>
              <div class="line muted" style="margin:10px 0 0 15px;height:13px"><span class="check off"></span>Текущие</div>
              <div class="line" style="margin-top:13px;height:13px"><span class="radio on"></span>Интеграторы</div>
            </div>
          </div>
          <div class="btn" style="width:75px;height:23px;margin:7px 0 0 104px">Применить</div>
          <div class="tree">
            ${[['Масса', true, true], ['Объём', true, false], ['Тепло', true, true], ['Время наработки', false, true]].map(([n, ex, on]) => html`
              <div class="line" style="gap:1px">
                ${ex ? html`<span class="exp"></span>` : html`<span style="width:9px;flex:none"></span>`}
                <span class="dots"></span>
                <span class="check" style="margin-right:3px">${on ? this.tick() : ''}</span>${n}
              </div>`)}
          </div>
        </div>
        <div class="w-main">
          <div class="w-cap">${icons.cupHot(13)}<span>1 микрорайон дом № 5 - ГВС</span></div>
          <div class="ct">
            <div class="cth">
              <div class="date">Дата - Время</div>
              <div class="mass">Масса, т</div>
              <div class="heat">Тепло, ГКал</div>
              <div class="run">Время наработки,</div>
              <div class="blank"></div>
              <div class="m1">М1</div><div class="m2">М2</div><div class="dq">ΔQ</div>
            </div>
            ${consumption.map((d, i) => html`<div class="ctr">
              <div class="d">${d}</div>
              <div>${i < 30 ? '-' : ''}</div><div>${i < 30 ? '-' : ''}</div><div>${i < 30 ? '-' : ''}</div>
              <div class=${hoursRun[i] ? 'v' : ''}>${hoursRun[i] ?? (i < 30 ? '-' : '')}</div>
              <div class="gray"></div>
            </div>`)}
          </div>
        </div>
      </div>
    </div>`;
  }

  render() {
    return html`
      <svg class="defs">
        <defs>
          <linearGradient id="gWall" x1="0" y1="0" x2="0" y2="1"><stop offset="0" stop-color="#f4f5f8"/><stop offset="1" stop-color="#b4b7c4"/></linearGradient>
          <linearGradient id="gRoof" x1="0" y1="0" x2="0" y2="1"><stop offset="0" stop-color="#6cb4ec"/><stop offset="1" stop-color="#2a6cb8"/></linearGradient>
          <radialGradient id="gSteel" cx=".4" cy=".35" r=".7"><stop offset="0" stop-color="#e8e8f0"/><stop offset="1" stop-color="#6e6e84"/></radialGradient>
          <linearGradient id="gWarn" x1="0" y1="0" x2="0" y2="1"><stop offset="0" stop-color="#fff6a8"/><stop offset="1" stop-color="#ecc820"/></linearGradient>
          <radialGradient id="gInfo" cx=".5" cy=".5" r=".6"><stop offset="0" stop-color="#eaf3fb"/><stop offset="1" stop-color="#a4c4e2"/></radialGradient>
          <radialGradient id="gOrb" cx=".5" cy=".6" r=".6"><stop offset="0" stop-color="#6cc0ec"/><stop offset="1" stop-color="#1c4c7c"/></radialGradient>
          <linearGradient id="gFold" x1="0" y1="0" x2="0" y2="1"><stop offset="0" stop-color="#fbeeb8"/><stop offset="1" stop-color="#edd27c"/></linearGradient>
          <radialGradient id="gChat" cx=".5" cy=".5" r=".6"><stop offset="0" stop-color="#7cd03c"/><stop offset="1" stop-color="#389a1c"/></radialGradient>
        </defs>
      </svg>
      <div class="app">
        <div class="title">
          <span class="logo">
            <svg width="10" height="14" viewBox="0 0 10 14"><path d="M5 1 L9 5 L5 8 L1 5Z" fill="#2a6ac4"/><path d="M1 7 L5 10 L9 7 L5 13Z" fill="#d03a34"/></svg>
          </span>
          <span>ЛЭРС УЧЕТ версия 3.07 R11.14</span>
          <div class="winbtns">
            <div class="winbtn"><svg width="7" height="7"><rect y="5" width="6" height="2" fill="#fff"/></svg></div>
            <div class="winbtn"><svg width="10" height="9"><path d="M3.500 .5H9.500V5.500M.5 3.500H6.500V8.500H.5Z" fill="none" stroke="#fff"/></svg></div>
            <div class="winbtn close">${this.cross()}</div>
          </div>
        </div>
        <div class="menu">
          ${['Файл', 'Справочники', 'Поквартирный учет', 'Опрос', 'Анализ', 'Администрирование', 'Сервис', 'Окно', 'Поддержка'].map((m) => html`<span>${m}</span>`)}
        </div>
        ${this.ribbon('main')}
        <div class="tabs">
          <div class="tab" style="width:93px">Объекты учета</div>
          <div class="tab" style="width:214px;margin-left:2px">Потребление 1 микрорайон дом № 5 - Г</div>
          <div class="tab on" style="width:107px">Ручной опрос<span class="x">${this.cross()}</span></div>
          <span class="tab-close">${this.cross('#2c5c8c')}</span>
        </div>
        <div class="toolbar">
          ${this.tbi('play', 15, 0)}${this.tbi('stop', 15, 10)}
          <span class="t-sep" style="margin-left:9px"></span>
          ${this.tbi('save', 15, 8)}${this.tbi('docx', 15, 11)}
          <span class="t-sep" style="margin-left:9px"></span>
          ${this.tbi('homeSm', 15, 9)}${this.tbi('table', 15, 11)}${this.tbi('chart', 15, 11)}
        </div>
        <div class="body">
          ${this.leftPanels()}
          ${this.journal()}
        </div>
        <div class="status">
          <span>Ручной опрос ▾</span>
          <span class="st-sep sp"></span>
          <span class="line" style="margin:0 10px 0 10px;gap:5px">${icons.box(15)}Служб опроса: 1; портов: 5, действует: 5, свободно: 5</span>
          <span class="st-sep"></span>
          <span class="st-box"></span>
          <span class="st-sep"></span>
          <span style="margin:0 10px 0 8px">Подключены к '178.72.94.7:10000' в 15:37 (30 мар)</span>
        </div>
        ${this.taskbar()}
      </div>
      ${this.consumption()}
    `;
  }
}
